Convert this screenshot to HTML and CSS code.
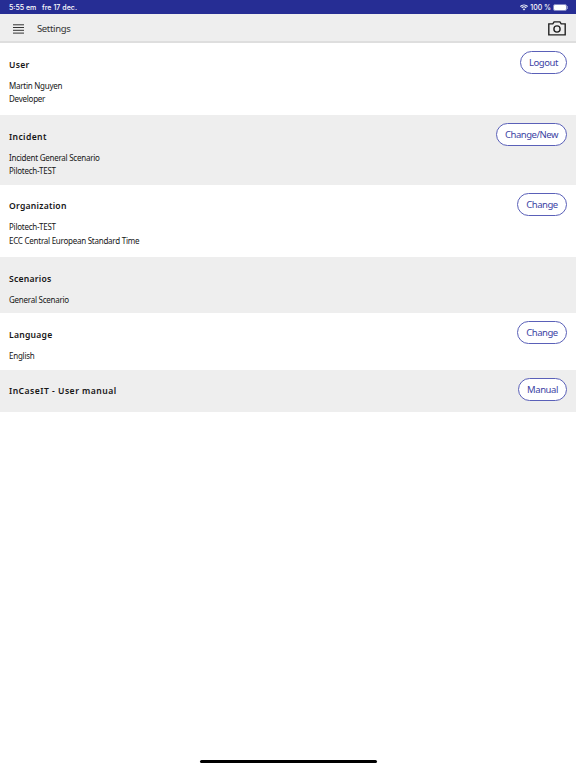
FILE: index.html
```html
<!DOCTYPE html>
<html lang="en">
<head>
    <meta charset="UTF-8">
    <meta name="viewport" content="width=device-width, initial-scale=1.0">
    <title>Settings</title>
    <link rel="stylesheet" href="styles.css">
</head>
<body>
    <div class="statusbar">
        <span class="time">5:55 em</span>
        <span class="date">fre 17 dec.</span>
        <svg class="wifi" width="8" height="7" viewBox="0 0 8 7">
            <path d="M0.4 2.5a5.2 5.2 0 0 1 7.2 0M1.7 3.9a3.3 3.3 0 0 1 4.6 0" fill="none" stroke="#fff" stroke-width="1.1"/>
            <path d="M2.7 5.1a1.9 1.9 0 0 1 2.6 0L4 6.5z" fill="#fff"/>
        </svg>
        <span class="percent">100 %</span>
        <span class="battery"></span>
    </div>

    <header class="header">
        <svg class="menu" width="11" height="10" viewBox="0 0 11 10">
            <path d="M0 .8h11M0 3.5h11M0 6.3h11M0 9.1h11" stroke="#333" stroke-width="1"/>
        </svg>
        <h1>Settings</h1>
        <svg class="camera" width="18" height="15" viewBox="0 0 18 15">
            <path d="M.8 2.9h4L6.1.9h5.8l1.3 2h4v11H.8z" fill="none" stroke="#222" stroke-width="1.4"/>
            <circle cx="9" cy="8" r="3.1" fill="none" stroke="#222" stroke-width="1.4"/>
        </svg>
    </header>

    <main>
        <section class="row user">
            <div class="info">
                <h2>User</h2>
                <p>Martin Nguyen</p>
                <p>Developer</p>
            </div>
            <button class="logout">Logout</button>
        </section>
        <section class="row incident">
            <div class="info">
                <h2>Incident</h2>
                <p>Incident General Scenario</p>
                <p>Pilotech-TEST</p>
            </div>
            <button class="change-new">Change/New</button>
        </section>
        <section class="row organization">
            <div class="info">
                <h2>Organization</h2>
                <p>Pilotech-TEST</p>
                <p>ECC Central European Standard Time</p>
            </div>
            <button class="change">Change</button>
        </section>
        <section class="row scenarios">
            <div class="info">
                <h2>Scenarios</h2>
                <p>General Scenario</p>
            </div>
        </section>
        <section class="row language">
            <div class="info">
                <h2>Language</h2>
                <p>English</p>
            </div>
            <button class="change">Change</button>
        </section>
        <section class="row manual">
            <div class="info">
                <h2>InCaseIT - User manual</h2>
            </div>
            <button class="open-manual">Manual</button>
        </section>
    </main>

    <div class="home-bar"></div>
</body>
</html>
```

FILE: styles.css
```css
* {
    box-sizing: border-box;
}
body {
    display: flex;
    flex-direction: column;
    height: 100vh;
    margin: 0;
    background-color: #fff;
    color: #161616;
    font-family: "Noto Sans", "Open Sans", sans-serif;
    overflow: hidden;
}
h1, h2, p {
    margin: 0;
}
.statusbar {
    display: flex;
    align-items: center;
    flex-shrink: 0;
    height: 14px;
    padding: 0 9px 0 9px;
    background-color: #262d94;
    color: #fff;
    font-family: Inter, sans-serif;
    font-size: 7px;
    font-weight: 500;
    white-space: nowrap;
}
.time {
    width: 33px;
}
.date {
    letter-spacing: 0.05px;
}
.wifi {
    margin-left: auto;
}
.percent {
    margin: 0 2px 0 2px;
}
.battery {
    position: relative;
    width: 14px;
    height: 7px;
    background-color: #fff;
    border: 1px solid #8589c4;
    border-radius: 2px;
}
.battery::after {
    content: "";
    position: absolute;
    top: 1px;
    right: -2px;
    width: 1px;
    height: 3px;
    background-color: #8589c4;
}
.header {
    display: flex;
    align-items: center;
    flex-shrink: 0;
    height: 29px;
    padding: 2px 10px 0 13px;
    background-color: #eee;
    border-bottom: 2px solid #dedede;
}
.header h1 {
    margin-left: 13px;
    color: #333;
    font-size: 9.5px;
    font-weight: 400;
    letter-spacing: -0.35px;
}
.camera {
    margin-left: auto;
}
.row {
    display: flex;
    justify-content: space-between;
    align-items: flex-start;
    height: 72px;
    padding: 8px 9px 0;
}
.row:nth-child(even) {
    background-color: #eee;
}
.incident {
    height: 69.5px;
}
.organization {
    height: 72.5px;
}
.scenarios,
.language {
    height: 56.3px;
}
.manual {
    height: 42.4px;
}
.info {
    padding-top: 6.5px;
}
.info h2 {
    margin-bottom: 7.2px;
    font-size: 8.6px;
    font-weight: 600;
    line-height: 14px;
    letter-spacing: 0.25px;
}
.incident h2 {
    letter-spacing: 0.38px;
}
.manual h2 {
    letter-spacing: 0.48px;
}
.info p {
    font-size: 8px;
    line-height: 13.5px;
    letter-spacing: -0.25px;
}
button {
    height: 23px;
    padding: 0;
    background-color: #fff;
    border: 1px solid #5a60b8;
    border-radius: 12px;
    color: #3c43a4;
    font-family: inherit;
    font-size: 9.5px;
    line-height: 21px;
    letter-spacing: -0.45px;
    text-align: center;
}
.logout {
    width: 47px;
}
.change-new {
    width: 71px;
}
.change {
    width: 50px;
}
.open-manual {
    width: 49px;
}
.home-bar {
    flex-shrink: 0;
    width: 177px;
    height: 3px;
    margin: auto auto 5px;
    background-color: #000;
    border-radius: 2px;
}
```
